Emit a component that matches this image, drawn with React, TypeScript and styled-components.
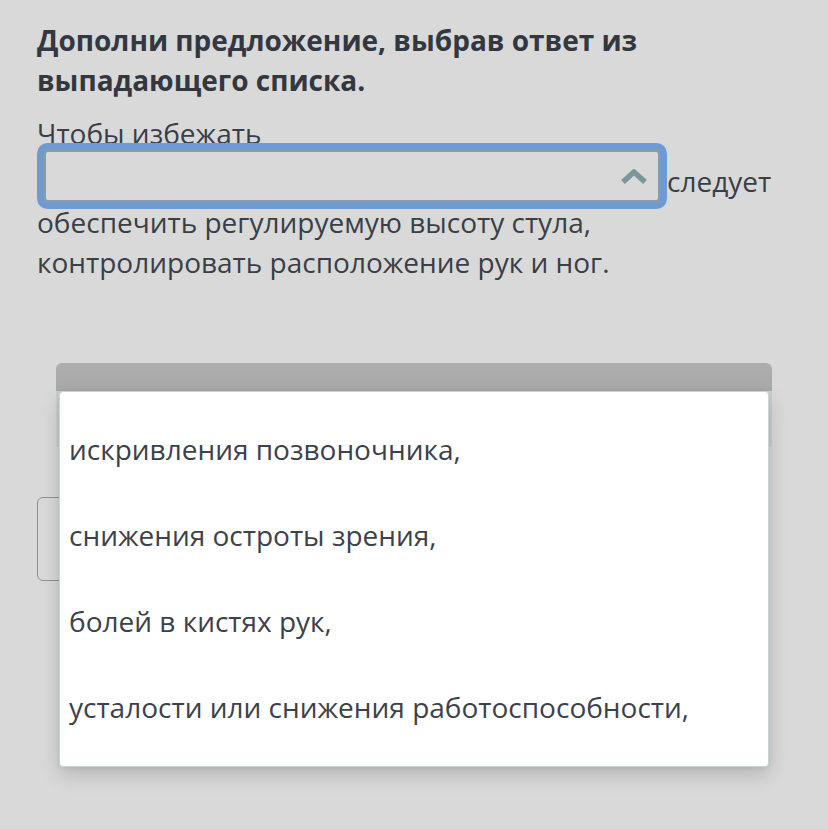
import React from 'react';
import styled, { createGlobalStyle } from 'styled-components';

const GlobalStyle = createGlobalStyle`
  html, body {
    margin: 0;
    padding: 0;
    background: #d9d9d9;
  }
  body {
    font-family: "Open Sans", "Noto Sans", sans-serif;
    color: #353a42;
  }
`;

const Page = styled.div`
  position: relative;
  width: 828px;
  height: 829px;
  box-sizing: border-box;
  padding: 20px 36px 0 37px;
  overflow: hidden;
`;

const Title = styled.h1`
  margin: 0;
  font-size: 28px;
  line-height: 40px;
  font-weight: 700;
  color: #333840;
`;

const Sentence = styled.p`
  margin: 13px 0 0;
  font-size: 28px;
  line-height: 40px;
  color: #3a3f47;
`;

const Select = styled.span`
  display: inline-block;
  box-sizing: border-box;
  width: 616px;
  height: 52px;
  margin: -3px 7px 0 7px;
  vertical-align: -10px;
  overflow: hidden;
  border: 2px solid #8b9ca2;
  border-radius: 4px;
  background: #d9d9d9;
  box-shadow: 0 0 0 7px #6f9bd2;
`;

const SelectInner = styled.span`
  display: flex;
  height: 100%;
  align-items: center;
  justify-content: flex-end;
  padding-right: 10px;
`;

const Chevron = styled.svg`
  width: 28px;
  height: 18px;
`;

const Backdrop = styled.div`
  margin-top: 81px;
`;

const Panel = styled.div`
  margin: 0 20px 0 19px;
  height: 84px;
  border-radius: 6px 6px 0 0;
  background: #cdd0d0;
  overflow: hidden;
`;

const PanelHeader = styled.div`
  height: 28px;
  background: linear-gradient(#adadad, #a9a9a9);
`;

const GhostButton = styled.div`
  margin-top: 50px;
  width: 200px;
  height: 84px;
  box-sizing: border-box;
  border: 1px solid #8f9192;
  border-radius: 6px;
`;

const Menu = styled.ul`
  position: absolute;
  left: 59px;
  top: 391px;
  width: 710px;
  height: 376px;
  box-sizing: border-box;
  margin: 0;
  padding: 14px 0 18px 9px;
  list-style: none;
  background: #ffffff;
  border: 1px solid #c6d5d8;
  border-radius: 4px;
  box-shadow: 0 8px 20px rgba(0, 0, 0, 0.16), 0 1px 4px rgba(0, 0, 0, 0.08);
`;

const Option = styled.li`
  height: 86px;
  display: flex;
  align-items: center;
  font-size: 28px;
  color: #3d424a;
`;

const options = [
  'искривления позвоночника,',
  'снижения остроты зрения,',
  'болей в кистях рук,',
  'усталости или снижения работоспособности,',
];

export default function App() {
  return (
    <>
      <GlobalStyle />
      <Page>
        <Title>Дополни предложение, выбрав ответ из выпадающего списка.</Title>
        <Sentence>
          Чтобы избежать{' '}
          <Select>
            <SelectInner>
              <Chevron viewBox="0 0 28 18">
                <polyline
                  points="3,15 14,5 25,15"
                  fill="none"
                  stroke="#7b979c"
                  strokeWidth="5.5"
                  strokeLinejoin="round"
                />
              </Chevron>
            </SelectInner>
          </Select>
          следует обеспечить регулируемую высоту стула, контролировать расположение рук и ног.
        </Sentence>
        <Backdrop>
          <Panel>
            <PanelHeader />
          </Panel>
          <GhostButton />
        </Backdrop>
        <Menu>
          {options.map((o) => (
            <Option key={o}>{o}</Option>
          ))}
        </Menu>
      </Page>
    </>
  );
}
